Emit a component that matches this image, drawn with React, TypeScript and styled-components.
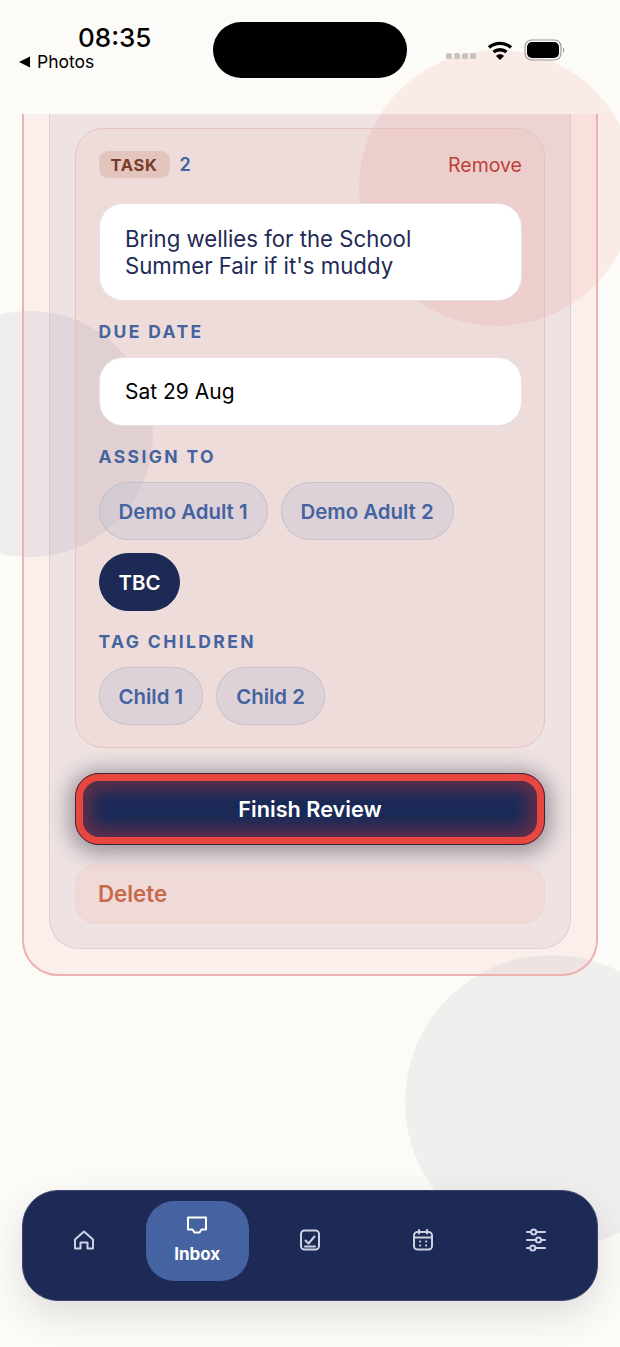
import styled, { createGlobalStyle } from "styled-components";

const GlobalStyle = createGlobalStyle`
  html, body {
    margin: 0;
    padding: 0;
    background: #fdfbf7;
  }
  * {
    box-sizing: border-box;
  }
`;

const Page = styled.div`
  position: relative;
  width: 620px;
  height: 1347px;
  display: flex;
  flex-direction: column;
  overflow: hidden;
  background: #fdfbf7;
  font-family: Inter, "Liberation Sans", sans-serif;
`;

// decorative background circles, they sit behind everything
const Blob = styled.div<{ $x: number; $y: number; $r: number; $color: string }>`
  position: absolute;
  left: ${(p) => p.$x - p.$r}px;
  top: ${(p) => p.$y - p.$r}px;
  width: ${(p) => p.$r * 2}px;
  height: ${(p) => p.$r * 2}px;
  border-radius: 50%;
  background: ${(p) => p.$color};
`;

const StatusBar = styled.div`
  position: relative;
  height: 114px;
  flex-shrink: 0;
  display: flex;
  padding: 22px 54px 0 19px;
`;

const TimeBlock = styled.div`
  width: 194px;
  display: flex;
  flex-direction: column;
`;

const Time = styled.div`
  font-size: 26px;
  font-weight: 500;
  line-height: 32px;
  color: #000;
  padding-left: 59px;
`;

const BackLink = styled.div`
  display: flex;
  align-items: center;
  gap: 6px;
  font-size: 17.5px;
  line-height: 15px;
  color: #000;
`;

const Island = styled.div`
  width: 194px;
  height: 56px;
  border-radius: 28px;
  background: #000;
`;

const StatusIcons = styled.div`
  margin-left: auto;
  display: flex;
  align-items: center;
  height: 56px;
  gap: 10px;
`;

const SignalDots = styled.div`
  display: flex;
  gap: 2px;
  margin-top: 12px;
`;

const SignalDot = styled.span`
  width: 6px;
  height: 6px;
  border-radius: 1.5px;
  background: #c9c4c0;
`;

const Scroller = styled.div`
  position: relative;
  height: 876px;
  flex-shrink: 0;
  overflow: hidden;
  padding: 0 22px;
`;

// low alpha tints so the circles behind stay visible through the cards
const OuterCard = styled.section`
  margin-top: -60px;
  height: 922px;
  padding: 0 25px 25px;
  border: 2px solid #eeb1b1;
  border-radius: 36px;
  background: rgba(210, 40, 60, 0.055);
`;

const InnerCard = styled.div`
  height: 100%;
  padding: 70.5px 25px 24px;
  border: 1.5px solid rgba(190, 180, 190, 0.4);
  border-radius: 30px;
  background: rgba(110, 100, 140, 0.09);
`;

const TaskCard = styled.div`
  height: 620px;
  padding: 22.5px 22px 0 22.5px;
  border: 1.5px solid #e8c3bd;
  border-radius: 28px;
  background: rgba(240, 145, 100, 0.07);
`;

const TaskHeader = styled.div`
  display: flex;
  align-items: center;
  height: 27px;
`;

const TaskBadge = styled.span`
  padding: 0 12px;
  height: 27px;
  display: flex;
  align-items: center;
  border-radius: 9px;
  background: #e3c5bd;
  color: #7a3a28;
  font-size: 16.5px;
  font-weight: 700;
  letter-spacing: 0.7px;
`;

const TaskNumber = styled.span`
  margin-left: 10px;
  color: #4463a0;
  font-size: 18px;
  font-weight: 600;
`;

const RemoveButton = styled.span`
  margin-left: auto;
  margin-top: 1px;
  color: #bd3f38;
  font-size: 19.5px;
`;

const Field = styled.div<{ $tall?: boolean }>`
  display: flex;
  align-items: center;
  height: ${(p) => (p.$tall ? 98 : 69)}px;
  padding: 0 25.5px;
  border: 1.5px solid #e8dfe4;
  border-radius: 24px;
  background: #fff;
  color: ${(p) => (p.$tall ? "#1e2a56" : "#000")};
  font-size: ${(p) => (p.$tall ? 22.2 : 21)}px;
  line-height: 27.5px;
`;

const TitleField = styled(Field)`
  margin-top: 25px;
`;

const SectionLabel = styled.div`
  margin: 20px 0 14px;
  height: 22px;
  line-height: 22px;
  color: #4463a0;
  font-size: 17.5px;
  font-weight: 700;
  letter-spacing: 2.4px;
`;

const ChipRow = styled.div`
  display: flex;
  flex-wrap: wrap;
  gap: 13px;
`;

const Chip = styled.span<{ $active?: boolean }>`
  display: flex;
  align-items: center;
  height: 58px;
  padding: 0 19px;
  border-radius: 29px;
  border: 1.5px solid ${(p) => (p.$active ? "#1e2a56" : "rgba(170, 165, 185, 0.4)")};
  background: ${(p) => (p.$active ? "#1e2a56" : "rgba(190, 195, 212, 0.36)")};
  color: ${(p) => (p.$active ? "#fff" : "#4463a0")};
  font-size: 20.4px;
  font-weight: 600;
`;

const FinishButton = styled.div`
  margin-top: 25px;
  height: 72px;
  display: flex;
  align-items: center;
  justify-content: center;
  border-radius: 24px;
  border: 8px solid #e8473f;
  outline: 1px solid #3a2440;
  outline-offset: -1px;
  background: #1a2a58;
  box-shadow:
    inset 0 0 16px 9px rgba(225, 60, 50, 0.34),
    0 3px 20px 6px rgba(30, 30, 45, 0.38);
  color: #fff;
  font-size: 21.7px;
  font-weight: 600;
`;

const DeleteButton = styled.div`
  margin-top: 19px;
  height: 60px;
  display: flex;
  align-items: center;
  padding: 0 22px;
  border: 1.5px solid #f0d3cd;
  border-radius: 22px;
  background: rgba(245, 190, 175, 0.2);
  color: #c9694c;
  font-size: 22.3px;
  font-weight: 600;
`;

const Spacer = styled.div`
  flex: 1;
`;

const TabBar = styled.nav`
  position: relative;
  flex-shrink: 0;
  height: 111px;
  margin: 0 22px 46px;
  padding: 10px 5px;
  display: grid;
  grid-template-columns: repeat(5, 1fr);
  border-radius: 36px;
  border: 1px solid #3a4670;
  background: #1e2a56;
  box-shadow: 0 14px 36px rgba(40, 40, 60, 0.14);
`;

const Tab = styled.div<{ $active?: boolean }>`
  height: 80px;
  width: ${(p) => (p.$active ? "103px" : "auto")};
  justify-self: center;
  display: flex;
  flex-direction: column;
  align-items: center;
  justify-content: ${(p) => (p.$active ? "flex-start" : "center")};
  gap: 7px;
  padding: ${(p) => (p.$active ? "12px 0 0" : "0 0 3px")};
  border-radius: 28px;
  background: ${(p) => (p.$active ? "#4463a0" : "transparent")};
  color: ${(p) => (p.$active ? "#fff" : "#cdd2e2")};
  font-size: 17px;
  font-weight: 700;
`;

const Icon = styled.svg`
  width: 24px;
  height: 24px;
  fill: none;
  stroke: currentColor;
  stroke-width: 2;
  stroke-linecap: round;
  stroke-linejoin: round;
`;

const BackArrow = () => (
  <svg width="12" height="12" viewBox="0 0 12 12">
    <path d="M0 6 11 0.5V11.5Z" fill="#000" />
  </svg>
);

const Wifi = () => (
  <svg width="28" height="22" viewBox="0 0 26 22" fill="none" stroke="#000" strokeWidth="3.4">
    <path d="M2 8.5C8 3 18 3 24 8.5" />
    <path d="M6.5 13C10 10 16 10 19.5 13" />
    <path d="M9 17 13 21 17 17C15 14.6 11 14.6 9 17Z" fill="#000" stroke="none" />
  </svg>
);

const Battery = () => (
  <svg width="42" height="22" viewBox="0 0 42 22">
    <rect x="1" y="1" width="36" height="20" rx="6.5" fill="none" stroke="#9a9a9a" strokeWidth="1.2" />
    <rect x="3" y="3" width="32" height="16" rx="5" fill="#000" />
    <path d="M39 8.5C40.4 9 40.4 13 39 13.5Z" fill="#8a8a8a" />
  </svg>
);

const HomeIcon = () => (
  <Icon viewBox="0 0 24 24">
    <path d="M3 11.5 12 3.5 21 11.5V20.5H15.5V14.5H8.5V20.5H3Z" />
  </Icon>
);

const InboxIcon = () => (
  <Icon viewBox="0 0 24 24">
    <path d="M3 4.5H21V16.5H16.5L14.5 19.5H9.5L7.5 16.5H3Z" />
  </Icon>
);

const TasksIcon = () => (
  <Icon viewBox="0 0 24 24">
    <rect x="3" y="2.5" width="18" height="19" rx="3.5" />
    <path d="M7.5 12.5 10.5 15.5 16.5 8.5" />
    <path d="M7 18.5H17" />
  </Icon>
);

const CalendarIcon = () => (
  <Icon viewBox="0 0 24 24">
    <rect x="3" y="4" width="18" height="17.5" rx="3.5" />
    <path d="M3 9.5H21M8 2V5.5M16 2V5.5" />
    <path d="M9 13.5H9.2M15 13.5H15.2M9 17.5H9.2M15 17.5H15.2" />
  </Icon>
);

const SlidersIcon = () => (
  <Icon viewBox="0 0 24 24">
    <path d="M3 4H7M12.5 4H21M3 12H12M17 12H21M3 20H6M11.5 20H21" />
    <circle cx="9.7" cy="4" r="2.6" />
    <circle cx="14.5" cy="12" r="2.6" />
    <circle cx="8.8" cy="20" r="2.6" />
  </Icon>
);

export default function App() {
  return (
    <Page>
      <GlobalStyle />
      <Blob $x={497} $y={188} $r={138} $color="#fbebe6" />
      <Blob $x={30} $y={434} $r={123} $color="#eeeded" />
      <Blob $x={552} $y={1102} $r={147} $color="#f0efee" />

      <StatusBar>
        <TimeBlock>
          <Time>08:35</Time>
          <BackLink>
            <BackArrow />
            Photos
          </BackLink>
        </TimeBlock>
        <Island />
        <StatusIcons>
          <SignalDots>
            <SignalDot />
            <SignalDot />
            <SignalDot />
            <SignalDot />
          </SignalDots>
          <Wifi />
          <Battery />
        </StatusIcons>
      </StatusBar>

      <Scroller>
        <OuterCard>
          <InnerCard>
            <TaskCard>
              <TaskHeader>
                <TaskBadge>TASK</TaskBadge>
                <TaskNumber>2</TaskNumber>
                <RemoveButton>Remove</RemoveButton>
              </TaskHeader>
              <TitleField $tall>Bring wellies for the School Summer Fair if it's muddy</TitleField>
              <SectionLabel>DUE DATE</SectionLabel>
              <Field>Sat 29 Aug</Field>
              <SectionLabel>ASSIGN TO</SectionLabel>
              <ChipRow>
                <Chip>Demo Adult 1</Chip>
                <Chip>Demo Adult 2</Chip>
                <Chip $active>TBC</Chip>
              </ChipRow>
              <SectionLabel>TAG CHILDREN</SectionLabel>
              <ChipRow>
                <Chip>Child 1</Chip>
                <Chip>Child 2</Chip>
              </ChipRow>
            </TaskCard>
            <FinishButton>Finish Review</FinishButton>
            <DeleteButton>Delete</DeleteButton>
          </InnerCard>
        </OuterCard>
      </Scroller>

      <Spacer />

      <TabBar>
        <Tab><HomeIcon /></Tab>
        <Tab $active><InboxIcon />Inbox</Tab>
        <Tab><TasksIcon /></Tab>
        <Tab><CalendarIcon /></Tab>
        <Tab><SlidersIcon /></Tab>
      </TabBar>
    </Page>
  );
}
